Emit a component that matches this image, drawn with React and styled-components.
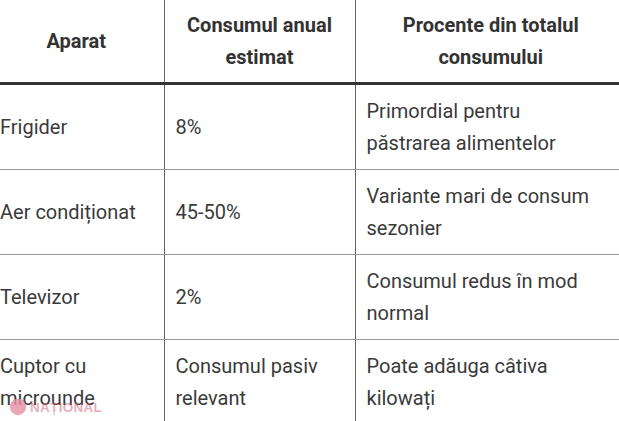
import React from "react";
import styled, { createGlobalStyle } from "styled-components";

const GlobalStyle = createGlobalStyle`
  html, body {
    margin: 0;
    padding: 0;
    background: #fff;
    overflow: hidden;
  }
`;

const rows = [
  ["Frigider", "8%", "Primordial pentru păstrarea alimentelor"],
  ["Aer condiționat", "45-50%", "Variante mari de consum sezonier"],
  ["Televizor", "2%", "Consumul redus în mod normal"],
  ["Cuptor cu microunde", "Consumul pasiv relevant", "Poate adăuga câtiva kilowați"],
];

const App = () => {
  return (
    <Page>
      <GlobalStyle />
      <Table>
        <colgroup>
          <col style={{ width: 175 }} />
          <col style={{ width: 191 }} />
          <col style={{ width: 271 }} />
        </colgroup>
        <thead>
          <tr>
            <Th>Aparat</Th>
            <Th>Consumul anual estimat</Th>
            <Th>Procente din totalul consumului</Th>
          </tr>
        </thead>
        <tbody>
          {rows.map((r, i) => (
            <tr key={i}>
              {r.map((c, j) => (
                <Td key={j}>{c}</Td>
              ))}
            </tr>
          ))}
        </tbody>
      </Table>
      <Watermark>
        <svg width="18" height="18" viewBox="0 0 22 22">
          <circle cx="11" cy="11" r="10" fill="#d9607a" opacity="0.55" />
          <path d="M1 11 A10 10 0 0 1 21 11 Z" fill="#eaa3b3" opacity="0.6" />
        </svg>
        <span>NAȚIONAL</span>
      </Watermark>
    </Page>
  );
};

export default App;

const Page = styled.div`
  position: relative;
  width: 619px;
  height: 421px;
  overflow: hidden;
  background: #fff;
`;

const Table = styled.table`
  margin-left: -11px;
  width: 637px;
  table-layout: fixed;
  border-collapse: collapse;
  font-family: Roboto, "Liberation Sans", sans-serif;
  color: #333;
  font-size: 20px;
  line-height: 32px;
`;

const Th = styled.th`
  height: 83px;
  padding: 9px 11px;
  box-sizing: border-box;
  font-weight: 700;
  text-align: center;
  vertical-align: middle;
  color: #333;
  border-bottom: 3px solid #333;
  & + & {
    border-left: 1.5px solid #666;
  }
`;

const Td = styled.td`
  height: 85px;
  padding: 10px 24px 10px 11px;
  box-sizing: border-box;
  font-weight: 400;
  text-align: left;
  vertical-align: middle;
  color: #3a3a3a;
  border-bottom: 1.5px solid #999;
  & + & {
    border-left: 1.5px solid #666;
  }
`;

const Watermark = styled.div`
  position: absolute;
  left: 9px;
  top: 398px;
  display: flex;
  align-items: center;
  gap: 3px;
  font-family: "Liberation Sans", Arial, sans-serif;
  font-weight: 700;
  font-size: 13.5px;
  color: rgba(210, 90, 110, 0.5);
  letter-spacing: 0.3px;
`;
